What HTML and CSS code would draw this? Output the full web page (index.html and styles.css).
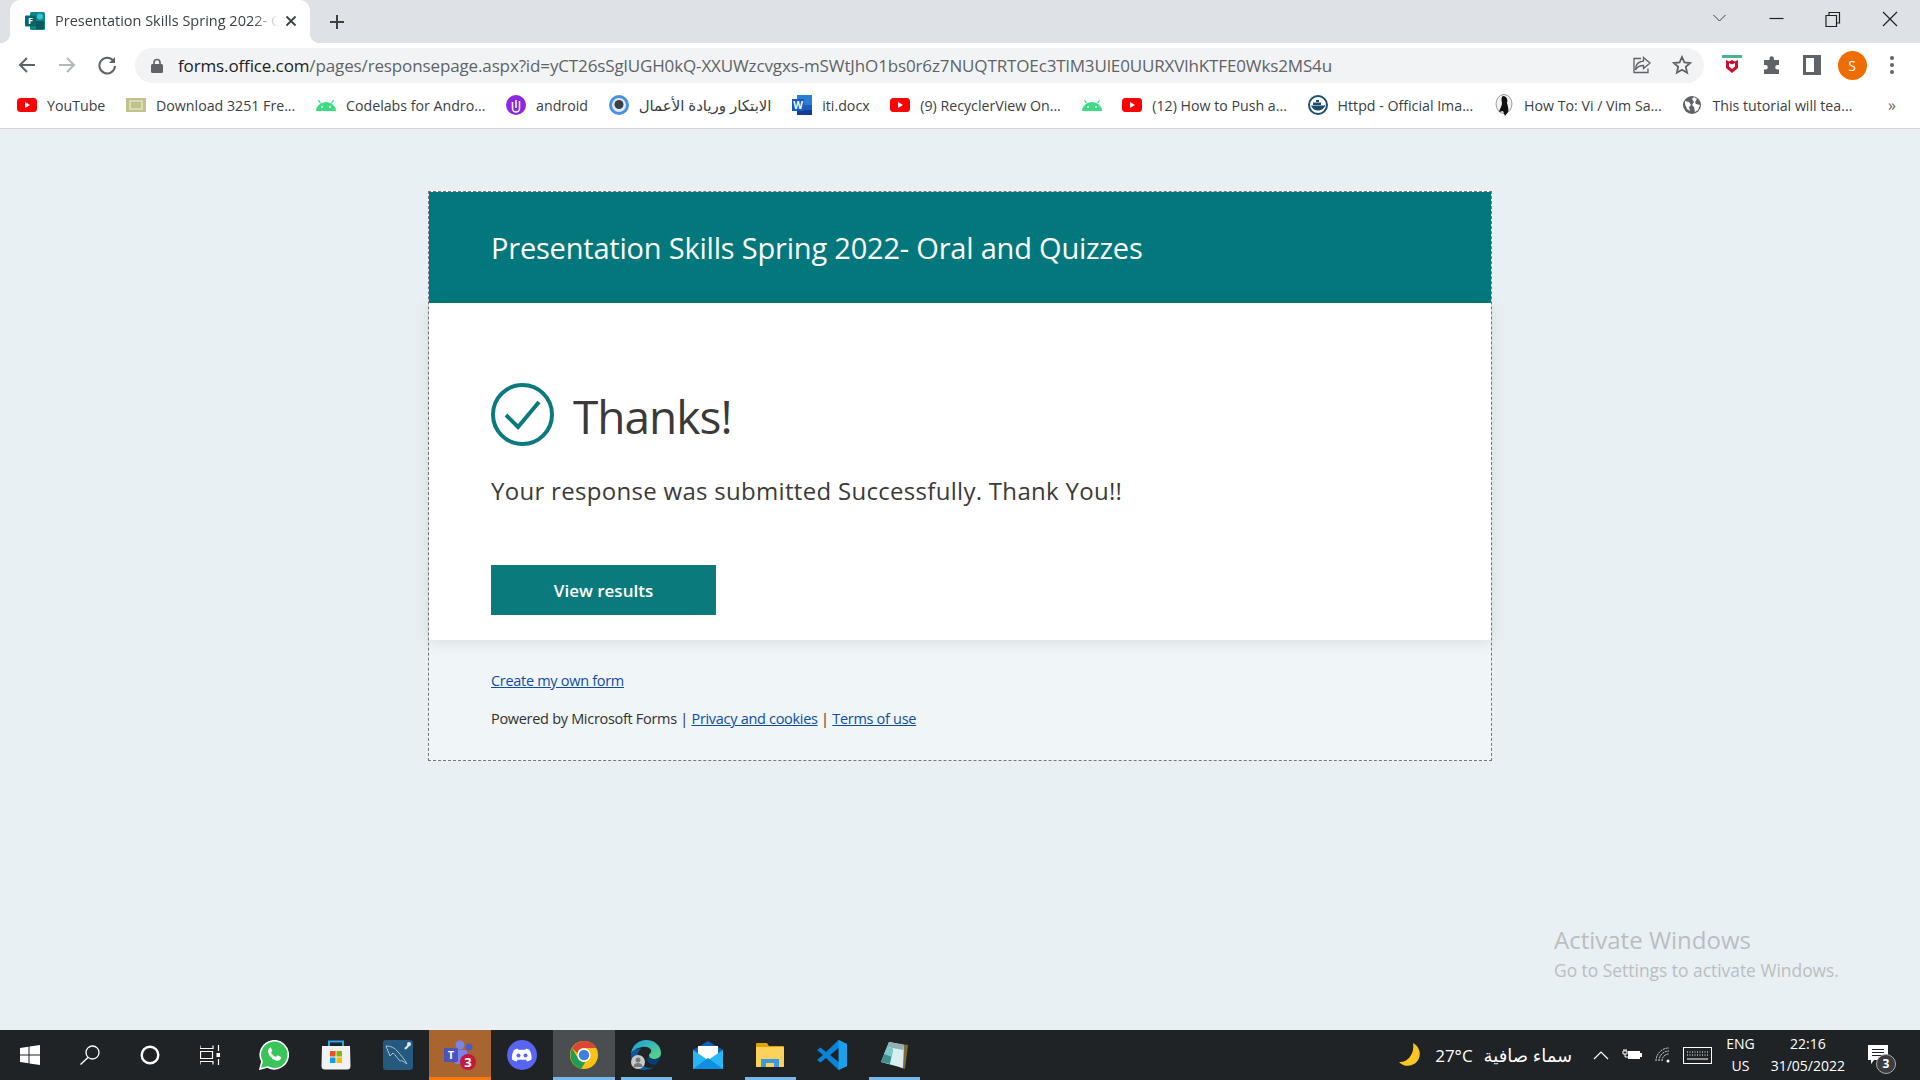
FILE: index.html
```html
<!DOCTYPE html>
<html lang="en">
<head>
  <meta charset="UTF-8" />
  <title>Presentation Skills Spring 2022- Oral and Quizzes</title>
  <link rel="stylesheet" href="styles.css">
</head>
<body>

<svg class="sprite" width="0" height="0">
  <symbol id="yt" viewBox="0 0 20 14">
    <rect width="20" height="14" rx="3.5" fill="#f00"/>
    <path d="M8 4l5 3-5 3z" fill="#fff"/>
  </symbol>
  <symbol id="droid" viewBox="0 0 20 12">
    <path d="M0 12a10 9 0 0 1 20 0z" fill="#3ddc84"/>
    <path d="M4.5 4.5L2.5 1M15.5 4.5l2-3.500" stroke="#3ddc84" stroke-width="1.2"/>
    <circle cx="6" cy="8" r="1" fill="#fff"/>
    <circle cx="14" cy="8" r="1" fill="#fff"/>
  </symbol>
</svg>

<div class="tabstrip">
  <div class="tab">
    <svg class="favicon" viewBox="0 0 20 20" width="20" height="20">
      <rect x="5" y="1" width="15" height="18" rx="1.500" fill="#10868a"/>
      <circle cx="15" cy="5.500" r="3" fill="#37c6d0"/>
      <rect x="11" y="10" width="8" height="8" fill="#0b5a5e"/>
      <rect x="0" y="4.500" width="11" height="11" rx="1" fill="#04686b"/>
      <text x="5.500" y="13" class="favicon-letter">F</text>
    </svg>
    <span class="tab-title">Presentation Skills Spring 2022- Oral and Quizzes</span>
    <svg class="tab-close" viewBox="0 0 12 12" width="12" height="12"><path d="M1.500 1.500l9 9m0-9l-9 9" stroke="#3c4043" stroke-width="1.800"/></svg>
  </div>
  <svg class="tab-new" viewBox="0 0 16 16" width="16" height="16"><path d="M8 1v14M1 8h14" stroke="#3c4043" stroke-width="2"/></svg>
  <div class="window-controls">
    <svg viewBox="0 0 56 20" width="56" height="20"><path d="M24.500 6l6 6 6-6" fill="none" stroke="#3c4043"/></svg>
    <svg viewBox="0 0 58 20" width="58" height="20"><path d="M24.500 9.500h14" stroke="#202124" stroke-width="1.200"/></svg>
    <svg viewBox="0 0 58 20" width="58" height="20"><path d="M23 6.500h10.500v11H23zM26 6.500V3.500h10.500v10.500h-3" fill="none" stroke="#202124" stroke-width="1.200"/></svg>
    <svg viewBox="0 0 58 20" width="58" height="20"><path d="M22 3l14 14m0-14L22 17" stroke="#202124" stroke-width="1.200"/></svg>
  </div>
</div>

<div class="toolbar">
  <div class="nav-btn"><svg viewBox="0 0 20 20" width="20" height="20"><path d="M18 10H3m7-7l-7 7 7 7" fill="none" stroke="#5f6368" stroke-width="2"/></svg></div>
  <div class="nav-btn"><svg viewBox="0 0 20 20" width="20" height="20"><path d="M2 10h15m-7-7l7 7-7 7" fill="none" stroke="#b4b7bb" stroke-width="2"/></svg></div>
  <div class="nav-btn"><svg viewBox="0 0 20 20" width="20" height="20"><path d="M16.500 6A7.800 7.800 0 1 0 18 11" fill="none" stroke="#5f6368" stroke-width="2"/><path d="M18 2v6h-6z" fill="#5f6368"/></svg></div>
  <div class="omnibox">
    <svg class="lock" viewBox="0 0 12 15" width="12" height="15"><path d="M3 6.500V4.500a3 3 0 0 1 6 0v2" fill="none" stroke="#5f6368" stroke-width="1.600"/><rect y="6" width="12" height="9" rx="1.500" fill="#5f6368"/></svg>
    <span class="url"><span class="url-host">forms.office.com</span>/pages/responsepage.aspx?id=yCT26sSglUGH0kQ-XXUWzcvgxs-mSWtJhO1bs0r6z7NUQTRTOEc3TlM3UlE0UURXVlhKTFE0Wks2MS4u</span>
    <svg class="omni-icon" viewBox="0 0 20 20" width="20" height="20"><path d="M11.500 2.500L18 8l-6.500 5.500V10.500C7.500 10.500 5 12 3.500 15c0-5 3-8.500 8-9z" fill="none" stroke="#5f6368" stroke-width="1.300"/><path d="M9 3.500H2v14h14v-4" fill="none" stroke="#5f6368" stroke-width="1.300"/></svg>
    <svg class="omni-icon star" viewBox="0 0 20 20" width="20" height="20"><path d="M10 2l2.400 5.400 5.800.6-4.400 3.900 1.300 5.800L10 14.700l-5.100 3 1.300-5.800L1.800 8l5.800-.6z" fill="none" stroke="#5f6368" stroke-width="1.800"/></svg>
  </div>
  <div class="nav-btn"><svg viewBox="0 0 20 20" width="20" height="20"><rect x="0" y="0" width="20" height="3" fill="#49b38e"/><path d="M4 5l3 1.500 3-1.500 3 1.500L16 5v8l-6 5-6-5z" fill="#c8102e"/><path d="M7 8v3.500l3 2.500 3-2.500V8l-3 1.500z" fill="#fff"/></svg></div>
  <div class="nav-btn"><svg viewBox="0 0 20 20" width="20" height="20"><path d="M7.500 3.500a2.200 2.200 0 0 1 4.400 0V5H17v5h-1.500a2.300 2.300 0 0 0 0 4.600H17V19H2v-4.400h1.500a2.300 2.300 0 0 0 0-4.600H2V5h5.500z" fill="#5f6368"/></svg></div>
  <div class="nav-btn"><svg viewBox="0 0 18 20" width="18" height="20"><rect x="1.500" y="1.500" width="15" height="17" fill="#fff" stroke="#5f6368" stroke-width="3"/><rect x="11" y="1" width="6" height="18" fill="#5f6368"/></svg></div>
  <div class="nav-btn"><span class="avatar">S</span></div>
  <div class="nav-btn"><svg viewBox="0 0 6 20" width="6" height="20"><circle cx="3" cy="3" r="2" fill="#5f6368"/><circle cx="3" cy="10" r="2" fill="#5f6368"/><circle cx="3" cy="17" r="2" fill="#5f6368"/></svg></div>
</div>

<div class="bookmarks">
  <div class="bookmark"><svg class="bm-icon" width="20" height="14"><use href="#yt"/></svg>YouTube</div>
  <div class="bookmark"><svg class="bm-icon" viewBox="0 0 20 14" width="20" height="14"><rect width="20" height="14" fill="#c2c28c"/><rect x="4" y="3" width="12" height="8" fill="none" stroke="#f2f2e0"/></svg>Download 3251 Fre...</div>
  <div class="bookmark"><svg class="bm-icon" width="20" height="12"><use href="#droid"/></svg>Codelabs for Andro...</div>
  <div class="bookmark"><svg class="bm-icon" viewBox="0 0 20 20" width="20" height="20"><circle cx="10" cy="10" r="10" fill="#8d28e0"/><path d="M6.500 7v6.500a3.500 3.500 0 0 0 7 0V6M10 5v8" fill="none" stroke="#fff" stroke-width="1.500"/></svg>android</div>
  <div class="bookmark"><svg class="bm-icon" viewBox="0 0 20 20" width="20" height="20"><circle cx="10" cy="10" r="10" fill="#4a90e2"/><circle cx="10" cy="10" r="7" fill="#dfeaf6"/><circle cx="10" cy="9.500" r="4.500" fill="#3a3f45"/></svg><span class="ar">الابتكار وريادة الأعمال</span></div>
  <div class="bookmark"><svg class="bm-icon" viewBox="0 0 20 20" width="20" height="20"><rect x="5" y="0" width="15" height="20" fill="#2b7cd3"/><rect x="5" y="10" width="15" height="5" fill="#185abd"/><rect x="5" y="15" width="15" height="5" fill="#103f91"/><rect x="0" y="4" width="12" height="12" fill="#185abd"/><text x="6" y="14" class="word-letter">W</text></svg>iti.docx</div>
  <div class="bookmark"><svg class="bm-icon" width="20" height="14"><use href="#yt"/></svg>(9) RecyclerView On...</div>
  <div class="bookmark"><svg class="bm-icon icon-only" width="20" height="12"><use href="#droid"/></svg></div>
  <div class="bookmark"><svg class="bm-icon" width="20" height="14"><use href="#yt"/></svg>(12) How to Push a...</div>
  <div class="bookmark"><svg class="bm-icon" viewBox="0 0 20 20" width="20" height="20"><circle cx="10" cy="10" r="9" fill="#fff" stroke="#1d4e6b" stroke-width="2"/><path d="M3 10.500h12c1 0 2-.5 2.500-1.500-.500 4-3.500 6.500-7.500 6.500-3.500 0-6-2-7-5z" fill="#1d4e6b"/><path d="M5 7.500h8v2.500H5zM8 5h3v2H8z" fill="#1d4e6b"/></svg>Httpd - Official Ima...</div>
  <div class="bookmark"><svg class="bm-icon" viewBox="0 0 20 22" width="20" height="22"><ellipse cx="10" cy="10" rx="8" ry="9.500" fill="#f2f2f2" stroke="#999"/><path d="M9 2c4 0 5 4 4 7 1 4 2 7 1 9l-3 4-2-5-4 1c1-4 3-6 3-9-.500-3-1-6 1-7z" fill="#111"/></svg>How To: Vi / Vim Sa...</div>
  <div class="bookmark"><svg class="bm-icon" viewBox="0 0 20 20" width="20" height="20"><circle cx="10" cy="10" r="9" fill="#5f6368"/><path d="M3 6l4 1 2 3-2 2 1 4-3-2-2-5zM12 2l3 2-2 3 1 2 4 1-2 5-3 2-1-5-2-2 2-3-2-3z" fill="#fff"/></svg>This tutorial will tea...</div>
  <div class="bm-more">»</div>
</div>

<main class="page">
  <section class="card">
    <header class="card-header">Presentation Skills Spring 2022- Oral and Quizzes</header>
    <div class="card-body">
      <div class="thanks-row">
        <svg viewBox="0 0 63 63" width="63" height="63">
          <circle cx="31.500" cy="31.500" r="29.500" fill="none" stroke="#0a7a7d" stroke-width="4"/>
          <path d="M15 32l12 12 21-25" fill="none" stroke="#0a7a7d" stroke-width="4"/>
        </svg>
        <h1 class="thanks">Thanks!</h1>
      </div>
      <p class="message">Your response was submitted Successfully. Thank You!!</p>
      <button class="results-btn">View results</button>
    </div>
    <footer class="card-footer">
      <div class="footer-line"><a href="#">Create my own form</a></div>
      <div class="footer-line second">Powered by Microsoft Forms | <a href="#">Privacy and cookies</a> | <a href="#">Terms of use</a></div>
    </footer>
  </section>
</main>

<div class="activate">
  <div class="activate-title">Activate Windows</div>
  <div class="activate-sub">Go to Settings to activate Windows.</div>
</div>

<div class="taskbar">
  <div class="sys-cell">
    <svg viewBox="0 0 20 20" width="20" height="20"><path d="M0 3l8.500-1.200V9.500H0zM9.500 1.600L20 0v9.500H9.500zM0 10.500h8.500v7.700L0 17zM9.500 10.500H20V20L9.500 18.400z" fill="#fff"/></svg>
  </div>
  <div class="sys-cell">
    <svg viewBox="0 0 20 20" width="20" height="20"><circle cx="12.500" cy="7.500" r="6.500" fill="none" stroke="#fff" stroke-width="1.300"/><path d="M8 12.500L.5 19.500" stroke="#fff" stroke-width="1.400"/></svg>
  </div>
  <div class="sys-cell">
    <svg viewBox="0 0 20 20" width="20" height="20"><circle cx="10" cy="10" r="8.300" fill="none" stroke="#fff" stroke-width="2.400"/></svg>
  </div>
  <div class="sys-cell last">
    <svg viewBox="0 0 20 20" width="20" height="20"><path d="M0 .5v3h13v-3M0 19.500v-3h13v3M.5 6.500h12v7H.5zM18.500 0v6M18.500 14v6" fill="none" stroke="#fff" stroke-width="1.200"/><rect x="16.500" y="8" width="4" height="4" fill="#fff"/></svg>
  </div>

  <div class="app-cell">
    <svg viewBox="0 0 30 30" width="30" height="30"><path d="M1 29l2-7.500A14 14 0 1 1 8.500 27z" fill="#3ac45a" stroke="#fff" stroke-width="1.600"/><path d="M10.500 8c-1.500 1-2 3-1 5.500 1.500 3.500 4 5.800 7.500 7 2 .6 4-.2 4.800-1.800l.2-1.700-3.500-1.800-1.500 1.800c-2.500-1-4-2.500-5-4.800l1.300-1.500-1.500-3.500z" fill="#fff"/></svg>
  </div>
  <div class="app-cell">
    <svg viewBox="0 0 30 30" width="30" height="30"><path d="M8 6V1.500h14V6" fill="none" stroke="#29a6e8" stroke-width="2"/><path d="M1 6h28l.5 20a3.500 3.500 0 0 1-3.500 3.500H4A3.500 3.500 0 0 1 .5 26z" fill="#f2f2f2"/><rect x="9" y="11" width="5.500" height="5.500" fill="#f25022"/><rect x="15.500" y="11" width="5.500" height="5.500" fill="#7fba00"/><rect x="9" y="17.500" width="5.500" height="5.500" fill="#00a4ef"/><rect x="15.500" y="17.500" width="5.500" height="5.500" fill="#ffb900"/></svg>
  </div>
  <div class="app-cell">
    <svg viewBox="0 0 30 30" width="30" height="30"><rect width="30" height="30" rx="3" fill="#25597e"/><path d="M3 6c5 0 9 2 12 6 3 3 6 7 9 12-3-2-5-4-7-3-3-3-5-7-7-8l-3 3c-1-3-3-7-4-10z" fill="none" stroke="#a9c5d8"/><path d="M22 9l5-5" stroke="#dfe9f0" stroke-width="2.200"/><circle cx="26" cy="4" r="2" fill="#dfe9f0"/></svg>
  </div>
  <div class="app-cell teams">
    <svg viewBox="0 0 32 30" width="32" height="30"><circle cx="16" cy="5" r="4.500" fill="#7b83eb"/><circle cx="25" cy="7" r="3.500" fill="#5059c9"/><rect x="11" y="10" width="12" height="14" rx="2" fill="#7b83eb"/><rect x="0" y="8" width="14" height="14" rx="1" fill="#4b53bc"/><text x="7" y="19" class="teams-letter">T</text><circle cx="24" cy="22" r="8" fill="#c4183c"/><text x="24" y="27" class="teams-badge">3</text></svg>
  </div>
  <div class="app-cell">
    <svg viewBox="0 0 30 30" width="30" height="30"><circle cx="15" cy="15" r="15" fill="#5865f2"/><path d="M10.500 8.500C8.500 9 7.500 9.500 7 10c-1.500 2.500-2.500 6-2 9.500 1.500 1 3 1.700 4.500 2l1-1.700 8.500 0 1 1.700c1.500-.3 3-1 4.500-2 .5-3.500-.5-7-2-9.500-.5-.5-1.500-1-3.500-1.500l-.6 1.200h-7.200z" fill="#fff"/><circle cx="11.500" cy="15.500" r="2" fill="#5865f2"/><circle cx="18.500" cy="15.500" r="2" fill="#5865f2"/></svg>
  </div>
  <div class="app-cell focused running-full">
    <svg viewBox="0 0 40 40" width="28" height="28"><circle cx="20" cy="20" r="20" fill="#fbc116"/><path d="M20 0a20 20 0 0 1 17.300 10H20a10 10 0 0 0-9.500 7L3 10.500A20 20 0 0 1 20 0z" fill="#db4437"/><path d="M3 10.500l8 13.500a10 10 0 0 0 11 6l-6 9.600A20 20 0 0 1 3 10.500z" fill="#1f9d55"/><circle cx="20" cy="20" r="9.500" fill="#fff"/><circle cx="20" cy="20" r="7.500" fill="#3f7fe0"/></svg>
  </div>
  <div class="app-cell running">
    <svg viewBox="0 0 30 30" width="30" height="30"><defs><linearGradient id="edgeg" x1="0" y1="0" x2="1" y2="1"><stop offset="0" stop-color="#1b9de2"/><stop offset="1" stop-color="#5fd97a"/></linearGradient></defs><path d="M0 14C1 5 8 0 15 0c9 0 15 6 15 13 0 4-3 6-7 6-3 0-5-1-5-3 0-3 3-3 2-6-1-2-4-4-9-3C6 8 2 10 0 14z" fill="url(#edgeg)"/><path d="M0 14c2-4 6-6 10-5-3 2-4 5-3 9 1 5 5 9 11 10 3 0 6-1 9-4-5 5-10 6-15 6C5 30 0 23 0 14z" fill="#0c59a4"/><path d="M18 16c0 2 2 3 5 3 3 0 5-1 7-3-1 4-3 7-6 9-4 0-8-3-8-6z" fill="#0a3d73"/><circle cx="7" cy="22" r="7" fill="#c9c9c9"/><circle cx="7" cy="20" r="2.500" fill="#777"/><path d="M2.500 27c0-3 2-4 4.500-4s4.500 1 4.500 4z" fill="#777"/></svg>
  </div>
  <div class="app-cell">
    <svg viewBox="0 0 30 28" width="30" height="28"><path d="M15 0L30 9v4H0V9z" fill="#0f62b5"/><path d="M5 5h20v13H5z" fill="#fff"/><path d="M0 9l15 10L30 9v19H0z" fill="#29b6f2"/><path d="M0 28l15-11 15 11z" fill="#0f8fe0"/></svg>
  </div>
  <div class="app-cell running">
    <svg viewBox="0 0 28 24" width="28" height="24"><path d="M0 1a1 1 0 0 1 1-1h10l2 3h14a1 1 0 0 1 1 1v19a1 1 0 0 1-1 1H1a1 1 0 0 1-1-1z" fill="#e8a200"/><rect y="4" width="28" height="20" rx="1" fill="#fbd35a"/><path d="M5 24v-8h18v8h-5v-4h-8v4z" fill="#3b9ae1"/></svg>
  </div>
  <div class="app-cell">
    <svg viewBox="0 0 30 30" width="30" height="30"><path d="M21.500 0L30 4v22l-8.500 4L9 18l-5.500 4.500L0 20l6-5-6-5 3.500-2.500L9 12z" fill="#0a84d6"/><path d="M21.500 0L30 4v22l-8.500 4z" fill="#1aa0ec"/><path d="M21.500 8L13 15l8.500 7z" fill="#1f2326"/></svg>
  </div>
  <div class="app-cell running">
    <svg viewBox="0 0 28 28" width="28" height="28"><path d="M9 1l19 3-3 24-5-1z" fill="#7b6a3a"/><path d="M9 1l15 3-1 23L1 21z" fill="#d9eef0"/><path d="M9 1l15 3-.5 5L7 6z" fill="#8fb0b4"/><path d="M1 21L7 6l6 2-3 15z" fill="#3f8f92"/><path d="M7 6l6 2-1 8-8-3z" fill="#7cc8cc"/></svg>
  </div>

  <div class="tray">
    <svg class="moon" viewBox="0 0 23 24" width="23" height="24"><path d="M14 0A12 12 0 1 1 0 19C8 20 16 11 14 0z" fill="#f9c623"/></svg>
    <span class="temp">27°C</span>
    <span class="weather">سماء صافية</span>
    <svg class="tray-chevron" viewBox="0 0 16 9" width="16" height="9"><path d="M1 8l7-7 7 7" fill="none" stroke="#fff" stroke-width="1.200"/></svg>
    <svg class="tray-battery" viewBox="0 0 20 12" width="20" height="12"><path d="M2 0v2M4 0v2M1 2h4v3H1zM3 5v3h3" fill="none" stroke="#fff"/><rect x="6" y="2" width="12" height="8" fill="#fff"/><rect x="18" y="4" width="2" height="4" fill="#fff"/></svg>
    <svg class="tray-wifi" viewBox="0 0 16 16" width="16" height="16"><path d="M1 14A13 13 0 0 1 14 1M4 14A10 10 0 0 1 14 4M7 14a7 7 0 0 1 7-7" fill="none" stroke="#ddd" stroke-dasharray="2 .8"/><circle cx="13" cy="14" r="1.500" fill="#fff"/></svg>
    <svg class="tray-kbd" viewBox="0 0 29 17" width="29" height="17"><rect x=".5" y=".5" width="28" height="16" fill="none" stroke="#fff"/><path d="M4 5h21M4 8h21" stroke="#fff" stroke-dasharray="1 1.500"/><path d="M4 12h21" stroke="#fff"/></svg>
    <div class="lang"><span>ENG</span><span>US</span></div>
    <div class="clock"><span>22:16</span><span>31/05/2022</span></div>
    <div class="notif">
      <svg viewBox="0 0 20 20" width="20" height="20"><path d="M0 0h20v15H6l-3 4v-4H0z" fill="#fff"/><path d="M4 4.500h12M4 7.500h12M4 10.500h12" stroke="#1f2326"/></svg>
      <span class="notif-badge">3</span>
    </div>
  </div>
</div>

</body>
</html>
```

FILE: styles.css
```css
* {
  box-sizing: border-box;
}

html, body {
  height: 100%;
}

body {
  margin: 0;
  display: flex;
  flex-direction: column;
  overflow: hidden;
  font-family: "Open Sans", "DejaVu Sans", sans-serif;
  background: #e8f0f4;
  color: #323130;
}

.sprite {
  position: absolute;
}

/* browser chrome */
.tabstrip {
  height: 43px;
  flex-shrink: 0;
  display: flex;
  align-items: flex-end;
  background: #dee1e6;
}

.tab {
  position: relative;
  width: 300px;
  height: 43px;
  margin-left: 10px;
  padding: 0 13px 2px 15px;
  display: flex;
  align-items: center;
  background: #fff;
  border-radius: 10px 10px 0 0;
}

.tab::before, .tab::after {
  content: "";
  position: absolute;
  bottom: 0;
  width: 10px;
  height: 10px;
}

.tab::before {
  left: -10px;
  background: radial-gradient(circle at 0 0, transparent 10px, #fff 10.500px);
}

.tab::after {
  right: -10px;
  background: radial-gradient(circle at 100% 0, transparent 10px, #fff 10.500px);
}

.favicon {
  flex-shrink: 0;
}

.favicon-letter {
  font-size: 9px;
  font-weight: 700;
  fill: #fff;
  text-anchor: middle;
}

.tab-title {
  flex: 1;
  margin-left: 10px;
  overflow: hidden;
  white-space: nowrap;
  font-size: 14.500px;
  color: #3c4043;
  -webkit-mask-image: linear-gradient(to right, #000 88%, transparent 100%);
}

.tab-close {
  flex-shrink: 0;
  margin-left: 6px;
}

.tab-new {
  align-self: center;
  margin-left: 19px;
}

.window-controls {
  margin-left: auto;
  margin-right: 1px;
  align-self: center;
  display: flex;
  margin-bottom: 5px;
}

.toolbar {
  height: 41px;
  flex-shrink: 0;
  display: flex;
  align-items: center;
  padding: 3px 8px 0 7px;
  background: #fff;
}

.nav-btn {
  width: 40px;
  height: 36px;
  flex-shrink: 0;
  display: flex;
  align-items: center;
  justify-content: center;
}

.avatar {
  width: 29px;
  height: 29px;
  border-radius: 50%;
  background: #ef6c00;
  color: #fff;
  font-size: 14px;
  line-height: 29px;
  text-align: center;
}

.omnibox {
  flex: 1;
  height: 35px;
  margin: 0 8px 0 8px;
  padding: 0 12px 0 16px;
  display: flex;
  align-items: center;
  background: #f1f3f4;
  border-radius: 18px;
}

.lock {
  flex-shrink: 0;
}

.url {
  flex: 1;
  margin-left: 15px;
  white-space: nowrap;
  overflow: hidden;
  font-size: 17px;
  letter-spacing: -0.13px;
  color: #5f6368;
}

.url-host {
  color: #202124;
}

.omni-icon {
  flex-shrink: 0;
}

.omni-icon.star {
  margin-left: 20px;
}

.bookmarks {
  height: 45px;
  flex-shrink: 0;
  display: flex;
  align-items: center;
  padding: 0 0 2px 17px;
  background: #fff;
  border-bottom: 1px solid #d3d6da;
  font-size: 14.200px;
  color: #3c4043;
}

.bookmark {
  display: flex;
  align-items: center;
  margin-right: 20.700px;
  white-space: nowrap;
}

.bm-icon {
  margin-right: 10px;
  flex-shrink: 0;
}

.bm-icon.icon-only {
  margin-right: 0;
}

.ar {
  direction: rtl;
  font-size: 15px;
}

.word-letter {
  font-size: 10px;
  font-weight: 700;
  fill: #fff;
  text-anchor: middle;
}

.bm-more {
  margin-left: auto;
  margin-right: 24px;
  font-size: 16px;
  color: #5f6368;
}

/* page */
.page {
  flex: 1;
  padding-top: 62px;
}

.card {
  width: 1064px;
  height: 570px;
  margin: 0 auto;
  border: 1px dashed #777;
  background: #f0f5f8;
}

.card-header {
  height: 111px;
  padding-left: 62px;
  display: flex;
  align-items: center;
  background: #03787c;
  color: #fff;
  font-size: 29px;
  letter-spacing: -0.2px;
}

.card-body {
  height: 337px;
  padding: 80px 62px 0;
  background: #fff;
  box-shadow: 0 2px 14px rgba(0, 0, 0, 0.1);
}

.thanks-row {
  display: flex;
  align-items: center;
  gap: 19px;
  height: 63px;
}

.thanks {
  margin: 4px 0 0;
  font-size: 46px;
  font-weight: 400;
  letter-spacing: -1px;
  line-height: 63px;
  color: #3b3a39;
}

.message {
  margin: 28px 0 0;
  font-size: 24px;
  letter-spacing: 0.3px;
  line-height: 34px;
  color: #3b3a39;
}

.results-btn {
  display: block;
  width: 225px;
  height: 50px;
  margin-top: 57px;
  border: none;
  background: #0a7a7d;
  color: #fff;
  font-family: inherit;
  font-size: 17px;
  font-weight: 600;
}

.card-footer {
  padding: 29px 62px 0;
  font-size: 14.500px;
  letter-spacing: -0.3px;
  color: #323130;
}

.footer-line {
  line-height: 24px;
}

.footer-line.second {
  margin-top: 14px;
}

.card-footer a {
  color: #0f4ca3;
}

.activate {
  position: absolute;
  left: 1554px;
  top: 922px;
  color: #b9bec1;
}

.activate-title {
  font-size: 24px;
  line-height: 36px;
}

.activate-sub {
  font-size: 17.400px;
  line-height: 24px;
}

/* windows taskbar */
.taskbar {
  height: 50px;
  flex-shrink: 0;
  display: flex;
  align-items: stretch;
  background: #1f2326;
  color: #fff;
}

.sys-cell {
  width: 60px;
  display: flex;
  align-items: center;
  justify-content: center;
}

.sys-cell.last {
  margin-right: 3px;
}

.app-cell {
  position: relative;
  width: 62px;
  display: flex;
  align-items: center;
  justify-content: center;
}

.app-cell.teams {
  background: #a9652f;
  box-shadow: inset 0 -3px 0 #f7780f;
}

.app-cell.focused {
  background: #4b4e50;
}

.running::after, .running-full::after {
  content: "";
  position: absolute;
  bottom: 0;
  height: 3px;
  background: #76b9ed;
}

.running::after {
  left: 6px;
  right: 5px;
}

.running-full::after {
  left: 0;
  right: 0;
}

.teams-letter {
  font-size: 11px;
  font-weight: 700;
  fill: #fff;
  text-anchor: middle;
}

.teams-badge {
  font-size: 13px;
  font-weight: 700;
  fill: #fff;
  text-anchor: middle;
}

.tray {
  margin-left: auto;
  padding-right: 32px;
  display: flex;
  align-items: center;
  font-size: 17px;
}

.temp {
  margin-left: 13px;
}

.weather {
  margin-left: 11px;
  direction: rtl;
  font-size: 18px;
}

.tray-chevron {
  margin-left: 21px;
}

.tray-battery {
  margin-left: 13px;
}

.tray-wifi {
  margin-left: 13px;
}

.tray-kbd {
  margin-left: 12px;
}

.lang, .clock {
  display: flex;
  flex-direction: column;
  align-items: center;
  font-size: 14px;
  line-height: 22px;
}

.lang {
  margin-left: 14px;
}

.clock {
  margin-left: 16px;
}

.notif {
  position: relative;
  margin-left: 23px;
  display: flex;
}

.notif-badge {
  position: absolute;
  right: -8px;
  bottom: -9px;
  width: 20px;
  height: 20px;
  border: 1px solid #aaa;
  border-radius: 50%;
  background: #3a3d40;
  font-size: 12px;
  font-weight: 700;
  line-height: 18px;
  text-align: center;
}
```
